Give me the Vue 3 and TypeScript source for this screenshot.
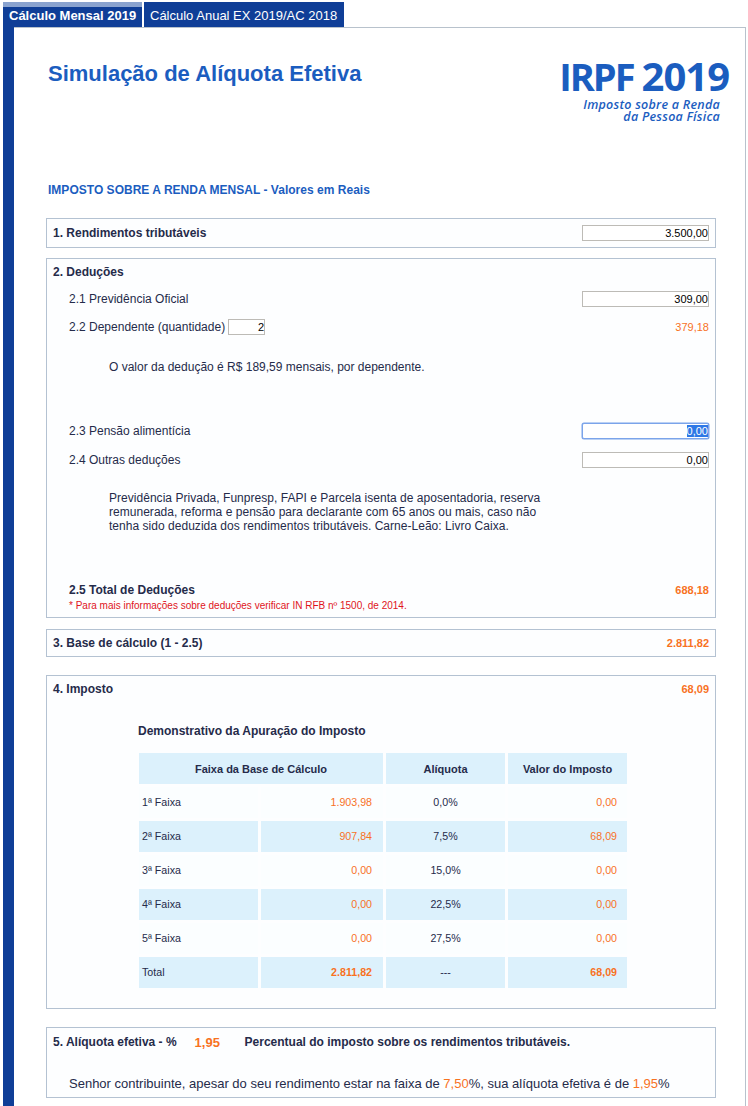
<script setup lang="ts">
interface Row { faixa: string; base: string; aliquota: string; imposto: string; total?: boolean }
const rows: Row[] = [
  { faixa: '1ª Faixa', base: '1.903,98', aliquota: '0,0%', imposto: '0,00' },
  { faixa: '2ª Faixa', base: '907,84', aliquota: '7,5%', imposto: '68,09' },
  { faixa: '3ª Faixa', base: '0,00', aliquota: '15,0%', imposto: '0,00' },
  { faixa: '4ª Faixa', base: '0,00', aliquota: '22,5%', imposto: '0,00' },
  { faixa: '5ª Faixa', base: '0,00', aliquota: '27,5%', imposto: '0,00' },
  { faixa: 'Total', base: '2.811,82', aliquota: '---', imposto: '68,09', total: true },
]
</script>

<template>
  <div class="page">
    <nav class="tabs">
      <div class="tab active">Cálculo Mensal 2019</div>
      <div class="tab">Cálculo Anual EX 2019/AC 2018</div>
    </nav>
    <main class="panel">
      <header class="head">
        <h1>Simulação de Alíquota Efetiva</h1>
        <div class="logo">
          <div class="logo-main"><span class="irpf">IRPF</span><span class="year">2019</span></div>
          <div class="logo-sub">Imposto sobre a Renda<br />da Pessoa Física</div>
        </div>
      </header>
      <h2>IMPOSTO SOBRE A RENDA MENSAL - Valores em Reais</h2>

      <section class="box b1">
        <div class="row"><strong>1. Rendimentos tributáveis</strong><input class="money" value="3.500,00" /></div>
      </section>

      <section class="box b2">
        <strong class="title">2. Deduções</strong>
        <div class="row sub r21"><span>2.1 Previdência Oficial</span><input class="money" value="309,00" /></div>
        <div class="row sub r22">
          <span class="dep">2.2 Dependente (quantidade)<input class="qty" value="2" /></span>
          <span class="orange val">379,18</span>
        </div>
        <p class="note n1">O valor da dedução é R$ 189,59 mensais, por dependente.</p>
        <div class="row sub r23"><span>2.3 Pensão alimentícia</span><div class="money focus"><mark>0,00</mark></div></div>
        <div class="row sub r24"><span>2.4 Outras deduções</span><input class="money" value="0,00" /></div>
        <p class="note n2">Previdência Privada, Funpresp, FAPI e Parcela isenta de aposentadoria, reserva remunerada, reforma e pensão para declarante com 65 anos ou mais, caso não tenha sido deduzida dos rendimentos tributáveis. Carne-Leão: Livro Caixa.</p>
        <div class="row sub r25"><strong>2.5 Total de Deduções</strong><strong class="orange val">688,18</strong></div>
        <p class="legal">* Para mais informações sobre deduções verificar IN RFB nº 1500, de 2014.</p>
      </section>

      <section class="box b3">
        <div class="row"><strong>3. Base de cálculo (1 - 2.5)</strong><strong class="orange val">2.811,82</strong></div>
      </section>

      <section class="box b4">
        <div class="row"><strong>4. Imposto</strong><strong class="orange val">68,09</strong></div>
        <h3>Demonstrativo da Apuração do Imposto</h3>
        <table>
          <colgroup>
            <col class="w119" /><col class="w122" /><col class="w119" /><col class="w119" />
          </colgroup>
          <thead>
            <tr><th colspan="2">Faixa da Base de Cálculo</th><th>Alíquota</th><th>Valor do Imposto</th></tr>
          </thead>
          <tbody>
            <tr v-for="r in rows" :key="r.faixa" :class="{ total: r.total }">
              <td class="c1">{{ r.faixa }}</td>
              <td class="c2 orange">{{ r.base }}</td>
              <td class="c3">{{ r.aliquota }}</td>
              <td class="c4 orange">{{ r.imposto }}</td>
            </tr>
          </tbody>
        </table>
      </section>

      <section class="box b5">
        <div class="eff">
          <strong>5. Alíquota efetiva - %</strong>
          <strong class="orange big">1,95</strong>
          <strong>Percentual do imposto sobre os rendimentos tributáveis.</strong>
        </div>
        <p class="msg">Senhor contribuinte, apesar do seu rendimento estar na faixa de <span class="orange">7,50</span>%, sua alíquota efetiva é de <span class="orange">1,95</span>%</p>
      </section>
    </main>
  </div>
</template>

<style scoped>
.page {
  width: 748px;
  height: 1106px;
  overflow: hidden;
  padding: 2px 0 0 3px;
  box-sizing: border-box;
  font-family: "Liberation Sans", Arial, sans-serif;
  font-size: 12px;
  color: #252b4a;
  display: flex;
  flex-direction: column;
}
.tabs { display: flex; gap: 2px; height: 25px; flex: none; }
.tab {
  background: #0f3e97;
  color: #fff;
  font-size: 13px;
  padding: 6px 6px 0;
  box-sizing: border-box;
  width: 200px;
  white-space: nowrap;
}
.tab.active {
  width: 139px;
  font-weight: 700;
  border-top: 5px solid #8aa3cf;
  padding: 1px 0 0 6px;
}
.panel {
  flex: 1;
  width: 743px;
  box-sizing: border-box;
  border-left: 11px solid #0f3e97;
  padding: 0 30px 0 32px;
  background: linear-gradient(#b8c2cc, #b8c2cc) top left / 100% 1px no-repeat, linear-gradient(#b8c2cc, #b8c2cc) top right / 1px 100% no-repeat, #fff;
}
.head { display: flex; justify-content: space-between; height: 142px; padding-top: 31px; box-sizing: border-box; margin-right: -13px; }
h1 { margin: 2px 0 0 2px; font-size: 22px; line-height: 28px; font-weight: 700; color: #1b5dbf; }
.logo { text-align: right; color: #1b5dbf; font-family: "Open Sans", sans-serif; }
.logo-main { font-weight: 700; line-height: 36px; white-space: nowrap; display: flex; align-items: baseline; gap: 8px; }
.irpf { font-size: 38px; letter-spacing: -2px; }
.year { font-size: 40px; letter-spacing: -1px; }
.logo-sub { font-style: italic; font-weight: 600; font-size: 12.5px; line-height: 12px; margin-right: 9px; margin-top: 5px; letter-spacing: .02em; }
h2 { margin: 0 0 0 2px; font-size: 12px; line-height: 14px; font-weight: 700; color: #1b5dbf; padding-top: 14px; height: 49px; box-sizing: border-box; letter-spacing: .02px; }
h3 { margin: 0; font-size: 12px; line-height: 14px; font-weight: 700; }
.box { border: 1px solid #b4c2d2; background: #fdfeff; box-sizing: border-box; width: 670px; padding: 0 6px; }
.row { display: flex; justify-content: space-between; align-items: center; }
.val { font-size: 11px; }
.b1 { height: 30px; margin-bottom: 10px; }
.b1 .row { height: 28px; }
.b2 { height: 360px; margin-bottom: 11px; padding-top: 6px; }
.title { display: block; line-height: 14px; }
.sub { padding-left: 16px; }
.r21 { margin-top: 12px; height: 16px; }
.r22 { margin-top: 12px; height: 16px; }
.dep { display: flex; align-items: center; }
.note { margin: 0; padding-left: 56px; line-height: 14px; width: 436px; }
.n1 { margin-top: 25px; height: 63px; width: 500px; }
.r23 { height: 16px; }
.r24 { margin-top: 13px; height: 16px; }
.n2 { margin-top: 23px; height: 92px; letter-spacing: .03px; }
.r25 { height: 14px; }
.legal { margin: 3px 0 0 16px; font-size: 10px; line-height: 11px; color: #e0141c; }
.b3 { height: 28px; margin-bottom: 18px; }
.b3 .row { height: 26px; }
.b4 { height: 334px; margin-bottom: 18px; padding-top: 6px; }
.b4 .row { height: 14px; }
.b4 h3 { margin: 28px 0 0 85px; }
table { border-spacing: 3px; border-collapse: separate; table-layout: fixed; width: 494px; margin: 12px 0 0 83px; font-size: 10.67px; }
.w119 { width: 119px; }
.w122 { width: 122px; }
th { background: #dcf1fc; height: 31px; padding: 0; font-weight: 700; font-size: 11px; color: #252b4a; }
td { height: 31px; padding: 0 0 2px; box-sizing: border-box; background: #fbfeff; }
tbody tr:nth-child(even) td { background: #dcf1fc; }
.c1 { padding-left: 3px; }
.c2 { text-align: right; padding-right: 11px; }
.c3 { text-align: center; }
.c4 { text-align: right; padding-right: 10px; }
.total .c2, .total .c4 { font-weight: 700; }
.b5 { height: 71px; padding-top: 6px; }
.eff { display: flex; align-items: center; height: 16px; }
.big { font-size: 13px; margin: 0 24px 0 18px; width: 26px; }
.msg { margin: 26px 0 0 16px; font-size: 13px; line-height: 16px; white-space: nowrap; }
.orange { color: #f8721f; }
.money {
  width: 127px;
  height: 16px;
  box-sizing: border-box;
  border: 1px solid #bdbbb6;
  background: #fff;
  text-align: right;
  font: 11px "Liberation Sans", Arial, sans-serif;
  color: #000;
  padding: 0;
  outline: none;
  line-height: 14px;
}
.focus { border: 1px solid #7ba4ea; border-radius: 2px; box-shadow: 0 0 0 .5px #7ba4ea; }
mark { background: #2e78e6; color: #fff; }
.qty {
  width: 37px;
  height: 16px;
  box-sizing: border-box;
  border: 1px solid #bdbbb6;
  margin-left: 3px;
  text-align: right;
  padding: 0;
  font: 11px "Liberation Sans", Arial, sans-serif;
  color: #000;
  outline: none;
}
</style>
